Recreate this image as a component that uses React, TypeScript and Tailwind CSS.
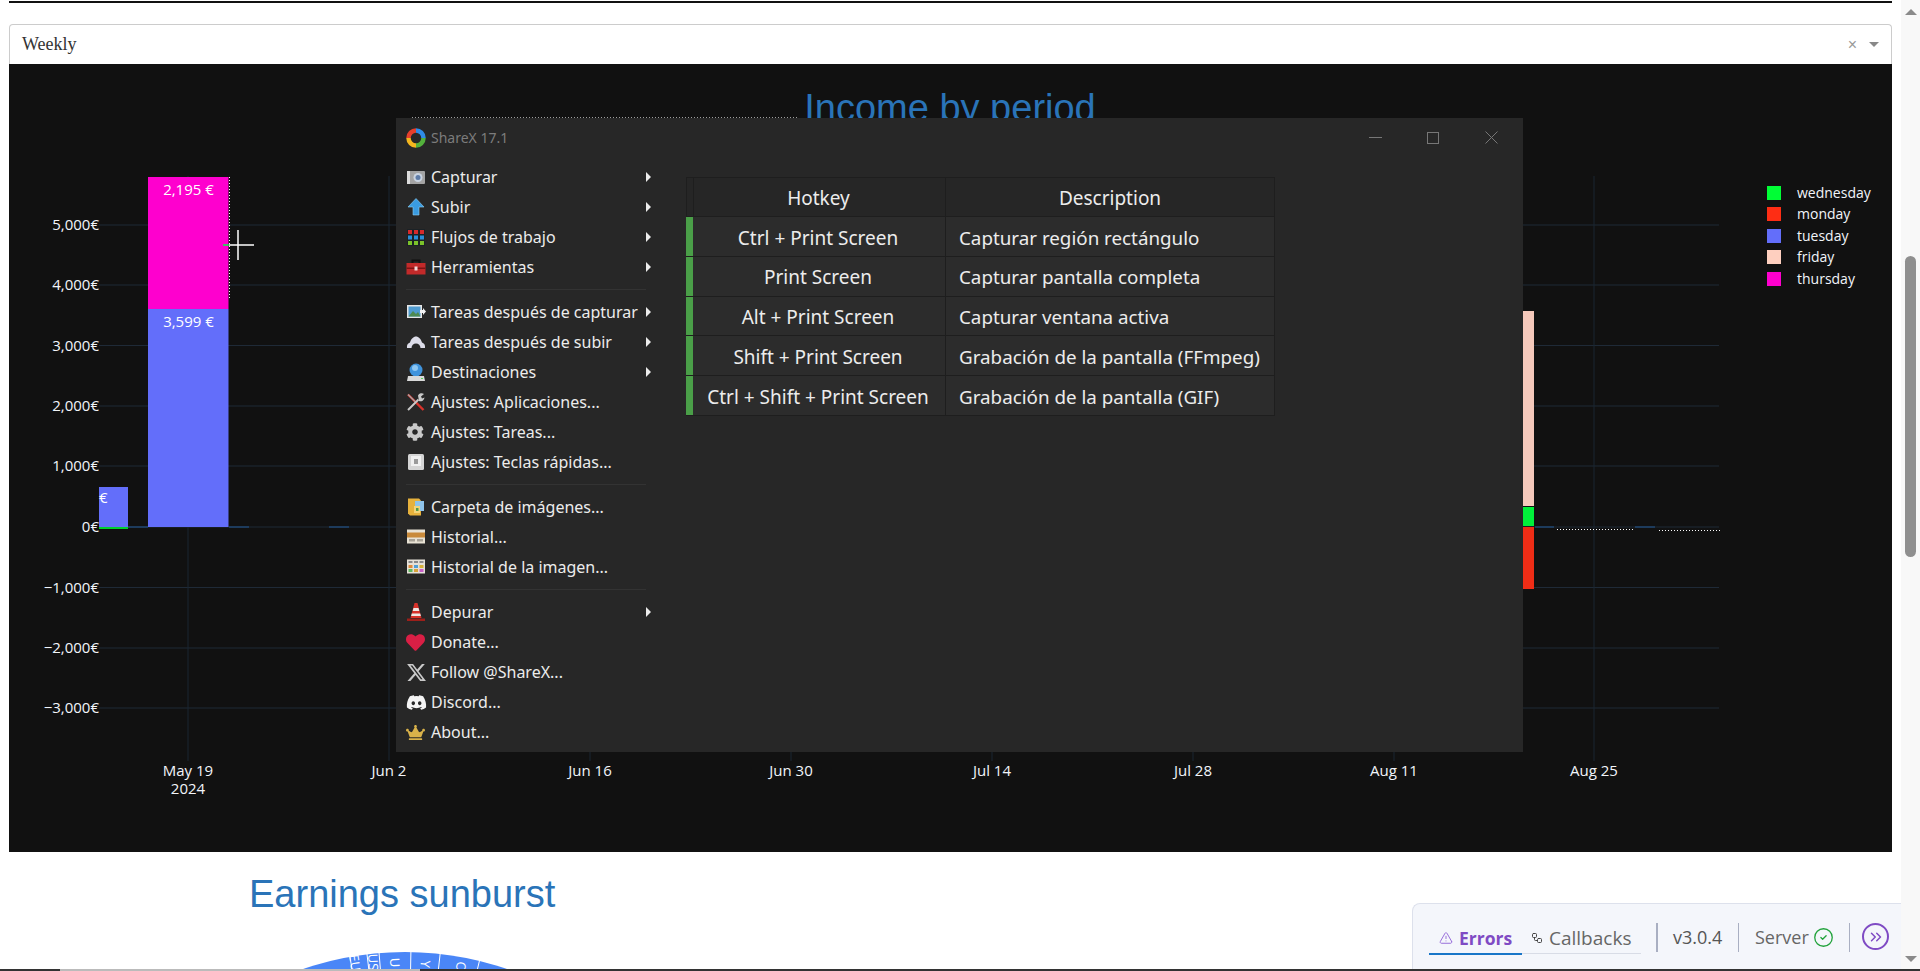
import React from 'react';
import { ChevronsRight, TriangleAlert, Workflow, CircleCheck } from 'lucide-react';
import { FaDiscord, FaCrown, FaHeart, FaCog } from 'react-icons/fa';
import { FaXTwitter } from 'react-icons/fa6';

const gridYs = [
  { y: 225, label: '5,000€' },
  { y: 285, label: '4,000€' },
  { y: 345.5, label: '3,000€' },
  { y: 406, label: '2,000€' },
  { y: 466, label: '1,000€' },
  { y: 527, label: '0€' },
  { y: 587.5, label: '−1,000€' },
  { y: 648, label: '−2,000€' },
  { y: 708, label: '−3,000€' },
];

const gridXs = [
  { x: 188, label: 'May 19' },
  { x: 389, label: 'Jun 2' },
  { x: 590, label: 'Jun 16' },
  { x: 791, label: 'Jun 30' },
  { x: 992, label: 'Jul 14' },
  { x: 1193, label: 'Jul 28' },
  { x: 1394, label: 'Aug 11' },
  { x: 1594, label: 'Aug 25' },
];

const legend = [
  { name: 'wednesday', color: '#00fe35', y: 186 },
  { name: 'monday', color: '#fe2d14', y: 207 },
  { name: 'tuesday', color: '#636efa', y: 229 },
  { name: 'friday', color: '#fecfbf', y: 250 },
  { name: 'thursday', color: '#fe00ce', y: 272 },
];

const IncomeChart = () => (
  <svg viewBox="9 64 1883 788" className="block w-[1883px] h-[788px]" style={{ fontFamily: '"Open Sans", sans-serif' }}>
    {gridYs.map((g) => (
      <line key={g.y} x1="99" x2="1719" y1={g.y} y2={g.y} stroke="#1f2a37" strokeWidth="1" />
    ))}
    {gridXs.map((g) => (
      <line key={g.x} x1={g.x} x2={g.x} y1="176" y2="761" stroke="#1b2633" strokeWidth="1" />
    ))}
    {gridYs.map((g) => (
      <text key={g.label} x="99" y={g.y + 5} textAnchor="end" fontSize="15" fill="#f2f5fa">{g.label}</text>
    ))}
    {gridXs.map((g) => (
      <text key={g.label} x={g.x} y="776" textAnchor="middle" fontSize="15" fill="#f2f5fa">{g.label}</text>
    ))}
    <text x="188" y="794" textAnchor="middle" fontSize="15" fill="#f2f5fa">2024</text>

    <text x="950" y="121" textAnchor="middle" fontSize="38" fill="#2a74b8" style={{ fontFamily: '"Liberation Sans", sans-serif' }}>Income by period</text>

    {/* zero line stubs */}
    <rect x="128" y="526" width="20" height="2" fill="#1d3b5c" />
    <rect x="229" y="526" width="20" height="2" fill="#1d3b5c" />
    <rect x="329" y="526" width="20" height="2" fill="#1d3b5c" />
    <rect x="1535" y="526" width="19" height="2" fill="#1d3b5c" />
    <rect x="1635" y="526" width="20" height="2" fill="#1d3b5c" />
    <line x1="1557" x2="1633" y1="529.5" y2="529.5" stroke="#fff" strokeDasharray="1 2" />
    <line x1="1659" x2="1720" y1="530.5" y2="530.5" stroke="#fff" strokeDasharray="1 2" />

    <rect x="99" y="487" width="29" height="40" fill="#636efa" />
    <rect x="99" y="527" width="29" height="2" fill="#00d030" />
    <text x="99" y="503" fontSize="15" fill="#fff">€</text>

    <rect x="148" y="177" width="80.500" height="132" fill="#fe00ce" />
    <rect x="148" y="309" width="80.500" height="218" fill="#636efa" />
    <text x="188.5" y="195" textAnchor="middle" fontSize="15" fill="#fff">2,195 €</text>
    <text x="188.5" y="327" textAnchor="middle" fontSize="15" fill="#fff">3,599 €</text>
    <line x1="229.5" x2="229.5" y1="177" y2="300" stroke="#fff" strokeDasharray="1 2" />

    <rect x="1522" y="311" width="12" height="195" fill="#f5c9bb" />
    <rect x="1522" y="507" width="12" height="19" fill="#00f03a" />
    <rect x="1522" y="527" width="12" height="62" fill="#ef2d16" />

    {legend.map((l) => (
      <g key={l.name}>
        <rect x="1767" y={l.y} width="14" height="14" fill={l.color} />
        <text x="1797" y={l.y + 12} fontSize="14" fill="#f2f5fa">{l.name}</text>
      </g>
    ))}

    {/* window top edge noise */}
    <line x1="412" x2="797" y1="117.5" y2="117.5" stroke="#fff" strokeOpacity=".6" strokeDasharray="1 2" />

    {/* crosshair cursor */}
    <line x1="223" x2="229" y1="245" y2="245" stroke="#00ff40" strokeWidth="1.5" />
    <line x1="238" x2="238" y1="230" y2="260" stroke="#fff" strokeWidth="1.5" />
    <line x1="229" x2="254" y1="245" y2="245" stroke="#fff" strokeWidth="1.5" />
  </svg>
);

const ShareXLogo = () => (
  <svg viewBox="0 0 22 22" className="w-[22px] h-[22px] shrink-0" fill="none" strokeWidth="4.5">
    <path d="M11 3.500A7.500 7.500 0 0 1 18.500 11" stroke="#2f8be6" />
    <path d="M18.500 11A7.500 7.500 0 0 1 11 18.500" stroke="#53b13c" />
    <path d="M11 18.500A7.500 7.500 0 0 1 3.500 11" stroke="#f3b61f" />
    <path d="M3.500 11A7.500 7.500 0 0 1 11 3.500" stroke="#e63f2c" />
  </svg>
);

const Cam = () => (
  <svg viewBox="0 0 20 20" className="w-5 h-5">
    <rect x="1" y="4" width="18" height="13" rx="1" fill="#a3a3a3" />
    <rect x="1" y="4" width="3" height="13" fill="#dcdcdc" />
    <circle cx="12" cy="10.500" r="4.500" fill="#c9d3e0" />
    <circle cx="12" cy="10.500" r="2.500" fill="#5e7ca8" />
  </svg>
);
const UpArrow = () => (
  <svg viewBox="0 0 20 20" className="w-5 h-5">
    <path d="M10 1.500 18 10h-5v8H7v-8H2z" fill="#3a9be0" stroke="#8fd0f5" strokeWidth=".6" />
  </svg>
);
const Flows = () => (
  <svg viewBox="0 0 20 20" className="w-5 h-5">
    <rect x="1" y="2" width="18" height="17" fill="#1b2226" />
    {[2, 8, 14].map((x) => (
      <React.Fragment key={x}>
        <rect x={x} y="3" width="4" height="4" fill="#d62a2a" />
        <rect x={x} y="8.500" width="4" height="4" fill="#2a8fd8" />
        <rect x={x} y="14" width="4" height="4" fill="#7cc22a" />
      </React.Fragment>
    ))}
  </svg>
);
const Toolbox = () => (
  <svg viewBox="0 0 20 20" className="w-5 h-5">
    <path d="M6.500 6V3.500h7V6" fill="none" stroke="#111" strokeWidth="2" />
    <rect x="0.500" y="6" width="19" height="11.500" fill="#c22a2a" />
    <rect x="0.500" y="10.500" width="19" height="1.500" fill="#7c1414" />
    <rect x="8.500" y="9.500" width="3" height="4" fill="#f3d8d8" />
  </svg>
);
const ImageArrow = () => (
  <svg viewBox="0 0 20 20" className="w-5 h-5">
    <rect x="1" y="3" width="15" height="13" fill="#e6e6e6" />
    <rect x="2.500" y="4.500" width="12" height="10" fill="#4f9bd0" />
    <path d="M2.500 14.500 7 9l3 3 2-2 2.500 4.500z" fill="#4d8a52" />
    <path d="M14 8h3V6l3 3.500-3 3.500v-2h-3z" fill="#f2f2f2" />
  </svg>
);
const CloudUp = () => (
  <svg viewBox="0 0 20 20" className="w-5 h-5">
    <path d="M1 16c-.5-3 1-5 3-5.500C5 7 7.500 4.500 10 4.500s5 2.500 6 6c2 .5 3.500 2.500 3 5.500h-4.500c0-2.500-2-4.500-4.500-4.500S5.500 13.500 5.500 16z" fill="#dcdce8" />
  </svg>
);
const Drive = () => (
  <svg viewBox="0 0 20 20" className="w-5 h-5">
    <circle cx="10" cy="8" r="6.500" fill="#3f93dc" />
    <circle cx="9" cy="6" r="3" fill="#8ec7f2" />
    <path d="M2 14h16l1 5H1z" fill="#d9d9d9" />
    <rect x="15" y="16" width="2" height="1" fill="#5ad25a" />
  </svg>
);
const Tools = () => (
  <svg viewBox="0 0 20 20" className="w-5 h-5">
    <path d="M2 2.500 17.500 18" stroke="#d8322a" strokeWidth="2.400" />
    <path d="M2 2.500 9 9.500" stroke="#a8a8a8" strokeWidth="1.300" />
    <path d="M2 18 12.500 7.500" stroke="#c9c9c9" strokeWidth="2" />
    <path d="M12 3.500a4 4 0 0 1 6-1.500l-3 2.500 1 2 2.500-1a4 4 0 0 1-5.500 3.500z" fill="#c9c9c9" />
  </svg>
);
const KeyCap = () => (
  <svg viewBox="0 0 20 20" className="w-5 h-5">
    <rect x="2" y="2" width="16" height="16" rx="1.500" fill="#d4d4d4" />
    <rect x="5" y="4" width="10" height="10" fill="#f0f0f0" />
    <rect x="8" y="7" width="4" height="5" fill="#9a9a9a" />
  </svg>
);
const Folder = () => (
  <svg viewBox="0 0 20 20" className="w-5 h-5">
    <path d="M2 1.500h11l2 2v15H4l-2-2z" fill="#e6b13c" />
    <rect x="9" y="4" width="9" height="10" fill="#8fc4ea" />
    <rect x="8" y="9" width="6" height="7" fill="#f2d47a" />
    <rect x="10" y="11" width="2.500" height="3" fill="#4f9b4a" />
  </svg>
);
const Card = () => (
  <svg viewBox="0 0 20 20" className="w-5 h-5">
    <rect x="1" y="2.500" width="18" height="14" fill="#e8e2d4" />
    <rect x="1" y="5.500" width="18" height="5" fill="#c98a3a" />
    <rect x="3" y="12" width="6" height="2.500" fill="#a8a296" />
    <rect x="11" y="12" width="6" height="2.500" fill="#a8a296" />
  </svg>
);
const Tiles = () => (
  <svg viewBox="0 0 20 20" className="w-5 h-5">
    <rect x="1" y="2.500" width="18" height="14" fill="#e6e1d8" />
    <rect x="2.500" y="4" width="4" height="2" fill="#8a8a8a" />
    <rect x="8" y="4" width="4" height="2" fill="#8a8a8a" />
    <rect x="13.500" y="4" width="4" height="2" fill="#8a8a8a" />
    <rect x="2.500" y="8" width="4" height="3" fill="#e08a3a" />
    <rect x="8" y="8" width="4" height="3" fill="#4fa0d8" />
    <rect x="13.500" y="8" width="4" height="3" fill="#d8b23a" />
    <rect x="2.500" y="12" width="4" height="3" fill="#5fb85f" />
    <rect x="8" y="12" width="4" height="3" fill="#d8a23a" />
    <rect x="13.500" y="12" width="4" height="3" fill="#c85fc8" />
  </svg>
);
const Cone = () => (
  <svg viewBox="0 0 20 20" className="w-5 h-5">
    <path d="M8.500 1h3l4 15H4.500z" fill="#d8322a" />
    <path d="M7.500 6h5l.8 3H6.700zM5.800 11.500h8.400l.7 2.500H5.100z" fill="#efe8e4" />
    <path d="M1 16.500h18V19H1z" fill="#9c1f1a" />
  </svg>
);

type MenuRow = { label: string; icon: React.ReactNode; arrow?: boolean; sepBefore?: boolean };

const menuRows: MenuRow[] = [
  { label: 'Capturar', icon: <Cam />, arrow: true },
  { label: 'Subir', icon: <UpArrow />, arrow: true },
  { label: 'Flujos de trabajo', icon: <Flows />, arrow: true },
  { label: 'Herramientas', icon: <Toolbox />, arrow: true },
  { label: 'Tareas después de capturar', icon: <ImageArrow />, arrow: true, sepBefore: true },
  { label: 'Tareas después de subir', icon: <CloudUp />, arrow: true },
  { label: 'Destinaciones', icon: <Drive />, arrow: true },
  { label: 'Ajustes: Aplicaciones...', icon: <Tools /> },
  { label: 'Ajustes: Tareas...', icon: <FaCog size={18} color="#c8c8c8" /> },
  { label: 'Ajustes: Teclas rápidas...', icon: <KeyCap /> },
  { label: 'Carpeta de imágenes...', icon: <Folder />, sepBefore: true },
  { label: 'Historial...', icon: <Card /> },
  { label: 'Historial de la imagen...', icon: <Tiles /> },
  { label: 'Depurar', icon: <Cone />, arrow: true, sepBefore: true },
  { label: 'Donate...', icon: <FaHeart size={19} color="#d91f45" /> },
  { label: 'Follow @ShareX...', icon: <FaXTwitter size={21} color="#c9c9c9" /> },
  { label: 'Discord...', icon: <FaDiscord size={21} color="#f4f4f4" /> },
  { label: 'About...', icon: <FaCrown size={19} color="#d9b24a" /> },
];

const hotkeys = [
  ['Ctrl + Print Screen', 'Capturar región rectángulo'],
  ['Print Screen', 'Capturar pantalla completa'],
  ['Alt + Print Screen', 'Capturar ventana activa'],
  ['Shift + Print Screen', 'Grabación de la pantalla (FFmpeg)'],
  ['Ctrl + Shift + Print Screen', 'Grabación de la pantalla (GIF)'],
];

const ShareXWindow = () => (
  <div className="absolute left-[387px] top-[54px] w-[1127px] h-[634px] bg-[#272727] flex flex-col font-['Noto_Sans',sans-serif] text-[#ececec]">
    <div className="h-[44px] flex items-center pl-[9px] pb-[5px] shrink-0">
      <ShareXLogo />
      <span className="ml-[4px] text-[14px] text-[#7c7c7c]">ShareX 17.1</span>
      <div className="ml-auto flex items-center">
        <span className="w-[13px] h-px bg-[#777777] mr-[45px]" />
        <span className="w-[12px] h-[12px] border border-[#777777] mr-[46px]" />
        <svg viewBox="0 0 13 13" className="w-[13px] h-[13px] mr-[25px]">
          <path d="M.5.500l12 12M12.500.500l-12 12" stroke="#777777" strokeWidth="1" />
        </svg>
      </div>
    </div>
    <div className="flex">
      <div className="w-[290px] shrink-0 flex flex-col">
        {menuRows.map((r) => (
          <React.Fragment key={r.label}>
            {r.sepBefore && (
              <div className="h-[15px] flex items-center pl-[10px] pr-[40px]">
                <div className="h-px w-full bg-[#333333]" />
              </div>
            )}
            <div className="h-[30px] flex items-center text-[16px] leading-none">
              <span className="w-[35px] pl-[10px] shrink-0 flex items-center">{r.icon}</span>
              <span className="whitespace-nowrap">{r.label}</span>
              {r.arrow && (
                <span className="ml-auto mr-[35px] w-0 h-0 border-y-[5px] border-y-transparent border-l-[5px] border-l-[#ececec]" />
              )}
            </div>
          </React.Fragment>
        ))}
      </div>
      <div className="mt-[15px] w-[589px] h-[239px] flex flex-col border-b border-[#1e1e1e] text-[19px]">
        <div className="h-[39px] flex bg-[#262626] border-t border-l border-[#1e1e1e]">
          <div className="w-[6px] shrink-0" />
          <div className="w-[252px] pt-[2px] pr-[2px] flex items-center justify-center border-l border-[#1e1e1e]">Hotkey</div>
          <div className="flex-1 pt-[2px] flex items-center justify-center border-x border-[#1e1e1e]">Description</div>
        </div>
        {hotkeys.map(([key, desc]) => (
          <div key={key} className="h-[40px] flex bg-[#2c2c2c] border-t border-[#1e1e1e]">
            <div className="w-[7px] shrink-0 bg-[#4a9f48]" />
            <div className="w-[252px] pt-[3px] pr-[2px] flex items-center justify-center whitespace-nowrap">{key}</div>
            <div className="flex-1 pt-[3px] flex items-center pl-[13px] text-[18.800px] whitespace-nowrap border-x border-[#1e1e1e]">{desc}</div>
          </div>
        ))}
      </div>
    </div>
  </div>
);

const Sunburst = () => (
  <svg viewBox="0 0 240 40" className="block w-[240px] h-[40px] overflow-visible ml-[90px]" style={{ fontFamily: '"Open Sans", sans-serif' }}>
    <circle cx="115" cy="320" r="314" fill="#4a86f7" />
    {[58, 76, 88.500, 121, 151, 193].map((x) => (
      <line key={x} x1={x} y1="0" x2={115 + (x - 115) * 0.6} y2="130" stroke="#fff" strokeWidth="1" />
    ))}
    <text x="0" y="0" fontSize="13" fill="#fff" transform="translate(59 9) rotate(82)">EU</text>
    <text x="0" y="0" fontSize="13" fill="#fff" transform="translate(78 8) rotate(87)">US</text>
    <text x="0" y="0" fontSize="13" fill="#fff" transform="translate(100 12) rotate(88)">U</text>
    <text x="0" y="0" fontSize="13" fill="#fff" transform="translate(131 14) rotate(95)">Y</text>
    <text x="0" y="0" fontSize="13" fill="#fff" transform="translate(167 15) rotate(98)">O</text>
  </svg>
);

const DevTools = () => (
  <div className="absolute right-0 bottom-0 w-[489px] h-[68px] bg-[#f4f6fb] border-t border-l border-[#dde1ec] rounded-tl-[8px] flex items-start pt-[19px] pl-[16px] font-['Open_Sans',sans-serif]">
    <div className="flex flex-col w-[212px] shrink-0">
      <div className="flex h-[30px] items-center">
        <div className="w-[93px] flex items-center pl-[10px] shrink-0">
          <TriangleAlert size={14} strokeWidth={1.5} className="text-[#8b5cd6] shrink-0" />
          <span className="ml-[6px] text-[17.500px] font-bold text-[#7f4bc4]">Errors</span>
        </div>
        <Workflow size={12} className="ml-[9px] text-[#444] shrink-0" />
        <span className="ml-[6px] text-[19px] text-[#666] whitespace-nowrap">Callbacks</span>
      </div>
      <div className="flex h-[2px]">
        <div className="w-[93px] bg-[#1976c8]" />
        <div className="flex-1 h-px bg-[#d8dce6]" />
      </div>
    </div>
    <div className="w-[2px] h-[29px] bg-[#a9afc2] ml-[15px] shrink-0" />
    <span className="ml-[15px] w-[50px] text-[18px] text-[#555] leading-[29px] whitespace-nowrap">v3.0.4</span>
    <div className="w-px h-[29px] bg-[#a9afc2] ml-[15px] shrink-0" />
    <span className="ml-[16px] w-[51px] text-[18px] text-[#666] leading-[29px] whitespace-nowrap">Server</span>
    <CircleCheck size={21} strokeWidth={1.5} className="ml-[7px] mt-[4px] text-[#22a33c] shrink-0" />
    <div className="w-px h-[29px] bg-[#a9afc2] ml-[15px] shrink-0" />
    <div className="ml-[12px] w-[27px] h-[27px] rounded-full border-2 border-[#7f4bc4] flex items-center justify-center shrink-0">
      <ChevronsRight size={18} strokeWidth={2} className="text-[#7f4bc4]" />
    </div>
  </div>
);

export default function App() {
  return (
    <div className="relative w-[1920px] h-[971px] overflow-hidden bg-white flex">
      <div className="w-[1901px] relative shrink-0">
        <div className="mx-[9px]">
          <div className="h-[2px] mt-px bg-[#111111]" />
          <div className="mt-[21px] h-[40px] border border-b-0 border-[#cccccc] rounded-t-[4px] flex items-center pl-[12px] pr-[10px] text-[#333] font-['Liberation_Serif',serif] text-[18px]">
            Weekly
            <span className="ml-auto text-[#999] text-[16px] font-['Liberation_Sans',sans-serif]">×</span>
            <span className="ml-[12px] mr-[2px] w-0 h-0 border-x-[5px] border-x-transparent border-t-[5px] border-t-[#888]" />
          </div>
          <div className="relative h-[788px] bg-[#111111] overflow-hidden">
            <IncomeChart />
            <ShareXWindow />
          </div>
          <h2 className="mt-[21px] ml-[240px] text-[38px] leading-[42px] text-[#2a74b8] font-['Liberation_Sans',sans-serif] font-normal">Earnings sunburst</h2>
          <div className="mt-[31px] ml-[191px]">
            <Sunburst />
          </div>
        </div>
        <DevTools />
      </div>
      <div className="w-[19px] shrink-0 bg-[#f8f8f8] flex flex-col items-center relative">
        <span className="mt-[9px] w-0 h-0 border-x-[6px] border-x-transparent border-b-[6px] border-b-[#8a8a8a]" />
        <div className="mt-[241px] w-[11px] h-[301px] rounded-full bg-[#8f8f8f]" />
        <span className="mt-auto mb-[9px] w-0 h-0 border-x-[6px] border-x-transparent border-t-[6px] border-t-[#8a8a8a]" />
      </div>
      <div className="absolute left-0 right-0 bottom-0 h-[2px] bg-[#333333] flex">
        <div className="ml-[60px] w-[360px] bg-[#bbbbbb]" />
      </div>
    </div>
  );
}
